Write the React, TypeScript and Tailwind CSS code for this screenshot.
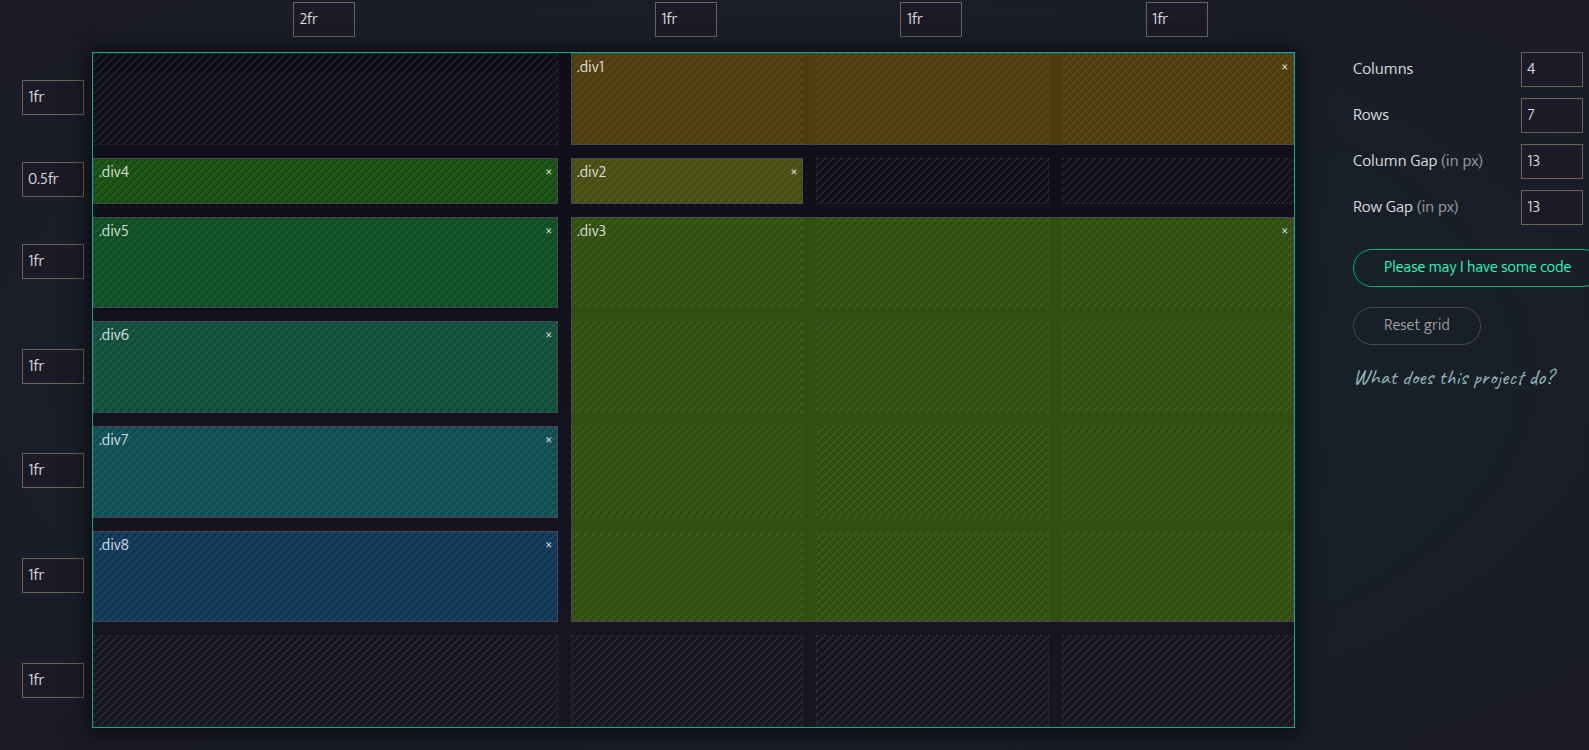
import { useState } from "react";

type Area = { name: string; place: string; fill: string };

const areas: Area[] = [
  { name: ".div1", place: "row-start-1 row-end-2 col-start-2 col-end-5", fill: "bg-[#503d0e]" },
  { name: ".div2", place: "row-start-2 row-end-3 col-start-2 col-end-3", fill: "bg-[#484f10]" },
  { name: ".div3", place: "row-start-3 row-end-7 col-start-2 col-end-5", fill: "bg-[#315010]" },
  { name: ".div4", place: "row-start-2 row-end-3 col-start-1 col-end-2", fill: "bg-[#185010]" },
  { name: ".div5", place: "row-start-3 row-end-4 col-start-1 col-end-2", fill: "bg-[#0f5023]" },
  { name: ".div6", place: "row-start-4 row-end-5 col-start-1 col-end-2", fill: "bg-[#10503b]" },
  { name: ".div7", place: "row-start-5 row-end-6 col-start-1 col-end-2", fill: "bg-[#105055]" },
  { name: ".div8", place: "row-start-6 row-end-7 col-start-1 col-end-2", fill: "bg-[#0e3856]" },
];

const cellRows = [
  "row-start-1",
  "row-start-2",
  "row-start-3",
  "row-start-4",
  "row-start-5",
  "row-start-6",
  "row-start-7",
];
const cellCols = ["col-start-1", "col-start-2", "col-start-3", "col-start-4"];

const columnTracks = "grid-cols-[2fr_1fr_1fr_1fr] gap-x-[13px]";
const rowTracks =
  "grid-rows-[minmax(0,1fr)_minmax(0,0.5fr)_repeat(5,minmax(0,1fr))] gap-y-[13px]";

const stripes =
  "bg-[linear-gradient(-45deg,rgba(150,145,160,0.14)_12.5%,transparent_12.5%,transparent_50%,rgba(150,145,160,0.14)_50%,rgba(150,145,160,0.14)_62.5%,transparent_62.5%)] bg-size-[8px_8px]";

const field =
  "block h-[35px] w-[62px] rounded-none border border-[#6b6355] bg-[#1c1a26] px-[5px] text-white/85 outline-none focus:border-[#08ffbd]";

function Field({ id, label, initial }: { id: string; label: string; initial: string }) {
  const [value, setValue] = useState(initial);
  return (
    <input
      id={id}
      aria-label={label}
      className={field}
      value={value}
      onChange={(e) => setValue(e.target.value)}
    />
  );
}

function Setting({ id, label, unit, initial }: { id: string; label: string; unit?: string; initial: string }) {
  const [value, setValue] = useState(initial);
  return (
    <div className="flex items-center justify-between">
      <label htmlFor={id} className="text-[17px]">
        {label} {unit && <span className="text-white/55">{unit}</span>}
      </label>
      <input
        id={id}
        inputMode="numeric"
        className={field}
        value={value}
        onChange={(e) => setValue(e.target.value)}
      />
    </div>
  );
}

export default function App() {
  const [items, setItems] = useState(areas);

  return (
    <div className="flex min-h-screen overflow-hidden bg-[radial-gradient(ellipse_at_center,#14272c,#1b1a26)] pt-[2px] pb-[22px] font-['Mukta','Noto_Sans',sans-serif] text-base font-light text-white/85">
      <div className="flex w-[92px] shrink-0 flex-col pt-[50px] pl-[22px]">
        <div className={`grid flex-1 items-center pb-[2px] ${rowTracks}`}>
          {["1fr", "0.5fr", "1fr", "1fr", "1fr", "1fr", "1fr"].map((size, i) => (
            <Field key={i} id={`row-${i + 1}`} label={`Row ${i + 1} size`} initial={size} />
          ))}
        </div>
      </div>

      <main className="flex min-w-0 flex-1 flex-col gap-[15px]">
        <div className={`grid justify-items-center pr-[2px] ${columnTracks}`}>
          {["2fr", "1fr", "1fr", "1fr"].map((size, i) => (
            <Field key={i} id={`column-${i + 1}`} label={`Column ${i + 1} size`} initial={size} />
          ))}
        </div>

        <section
          aria-label="Grid"
          className={`grid flex-1 border border-[#00b083] bg-linear-to-b from-[#0f0e18] to-[#191621] shadow-[0_2px_20px_4px_rgba(0,0,0,0.6)] ${columnTracks} ${rowTracks}`}
        >
          {items.map((item) => (
            <div
              key={item.name}
              className={`flex items-start justify-between border border-[#444450] px-[5px] leading-7 ${item.fill} ${item.place}`}
            >
              <span>{item.name}</span>
              <button
                type="button"
                aria-label={`Remove ${item.name}`}
                className="cursor-pointer"
                onClick={() => setItems(items.filter((other) => other !== item))}
              >
                ×
              </button>
            </div>
          ))}
          {cellRows.map((row) =>
            cellCols.map((col) => (
              <div
                key={row + col}
                className={`pointer-events-none border border-dotted border-[rgba(85,80,95,0.35)] ${stripes} ${row} ${col}`}
              />
            )),
          )}
        </section>
      </main>

      <aside className="ml-[58px] w-[236px] shrink-0 pt-[50px] pr-[6px]">
        <div className="flex flex-col gap-[11px]">
          <Setting id="columns" label="Columns" initial="4" />
          <Setting id="rows" label="Rows" initial="7" />
          <Setting id="column-gap" label="Column Gap" unit="(in px)" initial="13" />
          <Setting id="row-gap" label="Row Gap" unit="(in px)" initial="13" />
        </div>
        <div className="mt-6 flex flex-col items-start gap-5">
          <button
            type="button"
            className="h-[38px] cursor-pointer rounded-full border border-[#00b083] px-[30px] whitespace-nowrap text-[#1fffc0]"
          >
            Please may I have some code
          </button>
          <button
            type="button"
            className="h-[38px] cursor-pointer rounded-full border border-[#484a50] px-[30px] whitespace-nowrap text-[#a59f99]"
          >
            Reset grid
          </button>
          <a
            href="#about"
            className="font-['Caveat',cursive] text-[22px] leading-6 font-normal whitespace-nowrap text-[#8fb3b5]"
          >
            What does this project do?
          </a>
        </div>
      </aside>
    </div>
  );
}
